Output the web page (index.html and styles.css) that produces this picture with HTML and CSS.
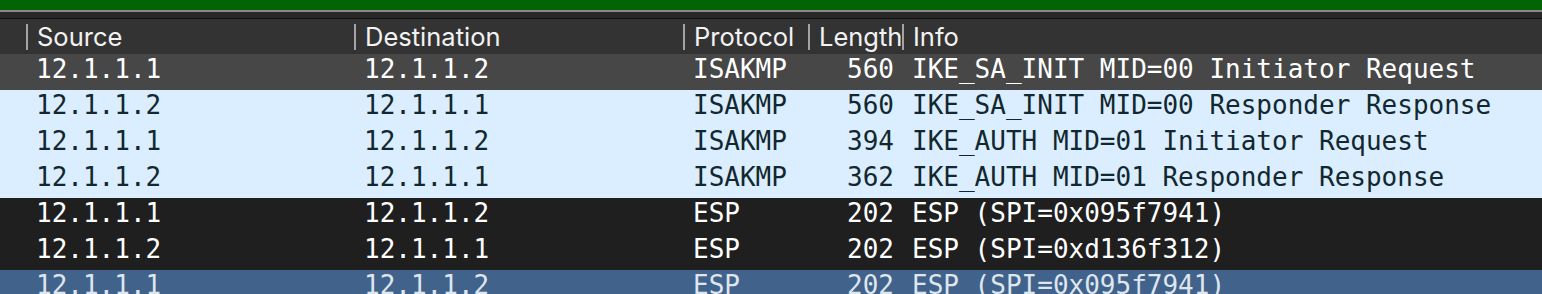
FILE: index.html
```html
<!DOCTYPE html>
<html lang="en">
<head>
  <meta charset="UTF-8" />
  <title>Packet List</title>
  <link rel="stylesheet" href="styles.css">
</head>
<body>
  <div class="filter-bar"></div>
  <div class="toolbar-strip"></div>

  <div class="packet-list">
    <div class="head">
      <div class="hcell"></div>
      <div class="hcell"><span class="sep"></span><span class="label">Source</span></div>
      <div class="hcell"><span class="sep"></span><span class="label">Destination</span></div>
      <div class="hcell"><span class="sep"></span><span class="label">Protocol</span></div>
      <div class="hcell"><span class="sep"></span><span class="label">Length</span></div>
      <div class="hcell"><span class="sep"></span><span class="label">Info</span></div>
    </div>

    <div class="row row-gray">
      <div class="cell"></div>
      <div class="cell">12.1.1.1</div>
      <div class="cell">12.1.1.2</div>
      <div class="cell">ISAKMP</div>
      <div class="cell num">560</div>
      <div class="cell">IKE_SA_INIT MID=00 Initiator Request</div>
    </div>
    <div class="row row-udp">
      <div class="cell"></div>
      <div class="cell">12.1.1.2</div>
      <div class="cell">12.1.1.1</div>
      <div class="cell">ISAKMP</div>
      <div class="cell num">560</div>
      <div class="cell">IKE_SA_INIT MID=00 Responder Response</div>
    </div>
    <div class="row row-udp">
      <div class="cell"></div>
      <div class="cell">12.1.1.1</div>
      <div class="cell">12.1.1.2</div>
      <div class="cell">ISAKMP</div>
      <div class="cell num">394</div>
      <div class="cell">IKE_AUTH MID=01 Initiator Request</div>
    </div>
    <div class="row row-udp">
      <div class="cell"></div>
      <div class="cell">12.1.1.2</div>
      <div class="cell">12.1.1.1</div>
      <div class="cell">ISAKMP</div>
      <div class="cell num">362</div>
      <div class="cell">IKE_AUTH MID=01 Responder Response</div>
    </div>
    <div class="row row-dark">
      <div class="cell"></div>
      <div class="cell">12.1.1.1</div>
      <div class="cell">12.1.1.2</div>
      <div class="cell">ESP</div>
      <div class="cell num">202</div>
      <div class="cell">ESP (SPI=0x095f7941)</div>
    </div>
    <div class="row row-dark">
      <div class="cell"></div>
      <div class="cell">12.1.1.2</div>
      <div class="cell">12.1.1.1</div>
      <div class="cell">ESP</div>
      <div class="cell num">202</div>
      <div class="cell">ESP (SPI=0xd136f312)</div>
    </div>
    <div class="row row-selected">
      <div class="cell"></div>
      <div class="cell">12.1.1.1</div>
      <div class="cell">12.1.1.2</div>
      <div class="cell">ESP</div>
      <div class="cell num">202</div>
      <div class="cell">ESP (SPI=0x095f7941)</div>
    </div>
  </div>
</body>
</html>
```

FILE: styles.css
```css
body {
  margin: 0;
  width: 1542px;
  height: 294px;
  overflow: hidden;
  background: #1f1f1f;
}
.filter-bar {
  height: 10px;
  background: #026402;
  border-bottom: 2px solid #8a8a8a;
}
.toolbar-strip {
  height: 6px;
  background: #282828;
  border-bottom: 1px solid #111;
}
.head, .row {
  display: grid;
  grid-template-columns: 26px 328px 329px 125px 94px 1fr;
}
.head {
  height: 35px;
  background: #333333;
  font-family: Inter, "Liberation Sans", sans-serif;
  font-size: 25.5px;
  color: #f2f2f2;
}
.hcell {
  display: flex;
  align-items: center;
  overflow: hidden;
  white-space: nowrap;
}
.sep {
  flex: none;
  width: 2px;
  height: 26px;
  background: #a3a3a3;
}
.label {
  margin-left: 9px;
  padding-bottom: 1px;
}
.row {
  height: 36px;
  font-family: "DejaVu Sans Mono", monospace;
  font-size: 26px;
}
.cell {
  line-height: 30px;
  padding: 0 10px 6px 10px;
  white-space: nowrap;
}
.cell.num {
  text-align: right;
  padding-right: 8px;
}
.row-gray {
  background: #474747;
  color: #ffffff;
}
.row-udp {
  background: #daeeff;
  color: #12272e;
}
.row-dark {
  background: #1f1f1f;
  color: #ffffff;
}
.row-selected {
  background: #41628b;
  color: #dfe6ee;
}
```
